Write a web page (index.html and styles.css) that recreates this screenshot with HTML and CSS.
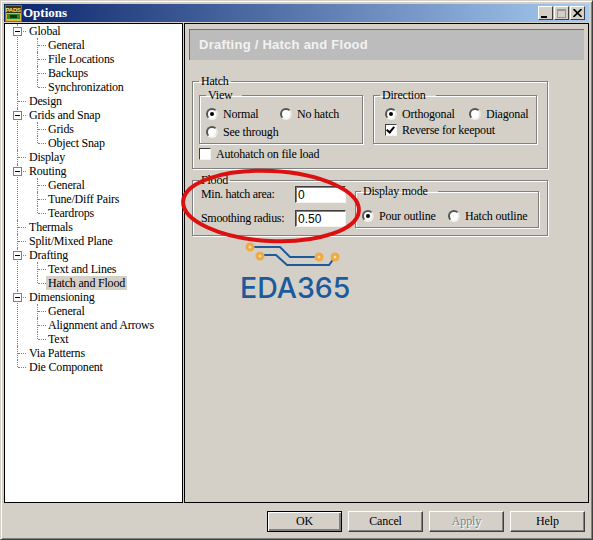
FILE: index.html
```html
<!DOCTYPE html>
<html lang="en">
<head>
    <meta charset="UTF-8">
    <title>Options</title>
    <link rel="stylesheet" href="styles.css">
</head>
<body>
    <div class="window">
        <div class="titlebar">
            <svg class="app-icon" width="17" height="17" viewBox="0 0 17 17">
                <rect width="17" height="17" fill="#8a6a1c"/>
                <rect x="1" y="1" width="15" height="7" fill="#3c3410"/>
                <text x="0.5" y="6.5" font-family="Liberation Sans" font-size="6" font-weight="bold" fill="#f4e08a">PADS</text>
                <rect x="1" y="8" width="15" height="8" fill="#e2b23c"/>
                <rect x="2" y="9" width="13" height="5" fill="#2f8a2f"/>
                <rect x="5" y="10" width="7" height="3" fill="#12380f"/>
            </svg>
            <span class="title-text">Options</span>
            <div class="win-buttons">
                <span class="win-btn"><i class="glyph-min"></i></span>
                <span class="win-btn"><i class="glyph-max"></i></span>
                <span class="win-btn">
                    <svg width="9" height="8" viewBox="0 0 9 8"><path d="M0.5 0 L8.5 8 M8.5 0 L0.5 8" stroke="#000" stroke-width="1.6"/></svg>
                </span>
            </div>
        </div>

        <div class="main">
            <div class="tree-panel">
                <ul class="tree">
                    <li><i class="toggle"></i><span class="label">Global</span>
                        <ul>
                            <li><span class="label">General</span></li>
                            <li><span class="label">File Locations</span></li>
                            <li><span class="label">Backups</span></li>
                            <li><span class="label">Synchronization</span></li>
                        </ul>
                    </li>
                    <li><span class="label">Design</span></li>
                    <li><i class="toggle"></i><span class="label">Grids and Snap</span>
                        <ul>
                            <li><span class="label">Grids</span></li>
                            <li><span class="label">Object Snap</span></li>
                        </ul>
                    </li>
                    <li><span class="label">Display</span></li>
                    <li><i class="toggle"></i><span class="label">Routing</span>
                        <ul>
                            <li><span class="label">General</span></li>
                            <li><span class="label">Tune/Diff Pairs</span></li>
                            <li><span class="label">Teardrops</span></li>
                        </ul>
                    </li>
                    <li><span class="label">Thermals</span></li>
                    <li><span class="label">Split/Mixed Plane</span></li>
                    <li><i class="toggle"></i><span class="label">Drafting</span>
                        <ul>
                            <li><span class="label">Text and Lines</span></li>
                            <li><span class="label selected">Hatch and Flood</span></li>
                        </ul>
                    </li>
                    <li><i class="toggle"></i><span class="label">Dimensioning</span>
                        <ul>
                            <li><span class="label">General</span></li>
                            <li><span class="label">Alignment and Arrows</span></li>
                            <li><span class="label">Text</span></li>
                        </ul>
                    </li>
                    <li><span class="label">Via Patterns</span></li>
                    <li><span class="label">Die Component</span></li>
                </ul>
            </div>

            <div class="content-panel">
                <div class="page-header">Drafting / Hatch and Flood</div>

                <fieldset class="group hatch">
                    <legend>Hatch</legend>
                    <div class="hatch-row">
                        <fieldset class="group view">
                            <legend>View</legend>
                            <div class="opts view-opts">
                                <span class="opt"><i class="radio on"></i>Normal</span>
                                <span class="opt"><i class="radio"></i>No hatch</span>
                                <span class="opt"><i class="radio"></i>See through</span>
                            </div>
                        </fieldset>
                        <fieldset class="group direction">
                            <legend>Direction</legend>
                            <div class="opts direction-opts">
                                <span class="opt"><i class="radio on"></i>Orthogonal</span>
                                <span class="opt"><i class="radio"></i>Diagonal</span>
                                <span class="opt wide"><i class="check on"></i>Reverse for keepout</span>
                            </div>
                        </fieldset>
                    </div>
                    <span class="opt autohatch"><i class="check"></i>Autohatch on file load</span>
                </fieldset>

                <fieldset class="group flood">
                    <legend>Flood</legend>
                    <div class="flood-row">
                        <div class="fields">
                            <label class="field">Min. hatch area:<input type="text" value="0"></label>
                            <label class="field">Smoothing radius:<input type="text" value="0.50"></label>
                        </div>
                        <fieldset class="group display-mode">
                            <legend>Display mode</legend>
                            <div class="opts display-opts">
                                <span class="opt"><i class="radio on"></i>Pour outline</span>
                                <span class="opt"><i class="radio"></i>Hatch outline</span>
                            </div>
                        </fieldset>
                    </div>
                </fieldset>

                <div class="logo">
                    <svg class="logo-mark" width="100" height="28" viewBox="0 0 100 28">
                        <g fill="none" stroke="#1c5a9c" stroke-width="2">
                            <path d="M5 5 H35 L45 15 H74"/>
                            <path d="M15 13 H31 L42 23 H84 L90 15"/>
                        </g>
                        <g fill="#fbdf9f" stroke="#eeaa44" stroke-width="3">
                            <circle cx="5" cy="5" r="3"/>
                            <circle cx="15" cy="14" r="3"/>
                            <circle cx="74" cy="15" r="3"/>
                            <circle cx="90" cy="15" r="3"/>
                        </g>
                    </svg>
                    <div class="logo-text">EDA365</div>
                </div>

                <svg class="highlight" width="190" height="84" viewBox="0 0 190 84">
                    <ellipse cx="95" cy="42" rx="88" ry="35" transform="rotate(3 95 42)" fill="none" stroke="#dc1010" stroke-width="4"/>
                </svg>
            </div>
        </div>

        <div class="footer">
            <button class="btn default" type="button">OK</button>
            <button class="btn" type="button">Cancel</button>
            <button class="btn" type="button" disabled>Apply</button>
            <button class="btn" type="button">Help</button>
        </div>
    </div>
</body>
</html>
```

FILE: styles.css
```css
body {
    margin: 0;
    background-color: #d4d0c8;
    font-family: "Liberation Serif", serif;
    font-size: 12px;
    letter-spacing: -0.2px;
    color: #000;
}

.window {
    box-sizing: border-box;
    width: 593px;
    height: 540px;
    padding: 3px;
    display: flex;
    flex-direction: column;
    border: 1px solid;
    border-color: #d4d0c8 #404040 #404040 #d4d0c8;
    box-shadow: inset 1px 1px 0 #fff, inset -1px -1px 0 #808080;
}

/* Title bar */
.titlebar {
    height: 18px;
    flex: none;
    display: flex;
    align-items: center;
    padding-right: 4px;
    background: linear-gradient(to right, #0a246a, #a6caf0);
}

.app-icon {
    flex: none;
    margin-left: 1px;
}

.title-text {
    margin-left: 1px;
    color: #fff;
    font-size: 13px;
    font-weight: bold;
    letter-spacing: 0;
}

.win-buttons {
    margin-left: auto;
    display: flex;
    gap: 1px;
}

.win-btn {
    box-sizing: border-box;
    width: 15px;
    height: 14px;
    display: flex;
    align-items: center;
    justify-content: center;
    background-color: #d4d0c8;
    border: 1px solid;
    border-color: #fff #404040 #404040 #fff;
}

.glyph-min {
    width: 6px;
    height: 2px;
    margin: 7px 3px 0 0;
    background-color: #000;
}

.glyph-max {
    box-sizing: border-box;
    width: 9px;
    height: 9px;
    border: 1px solid #9a968e;
    border-top-width: 2px;
}

/* Tree and page */
.main {
    height: 480px;
    flex: none;
    margin-top: 1px;
    display: flex;
    gap: 1px;
}

.tree-panel {
    box-sizing: border-box;
    width: 179px;
    background-color: #fff;
    border: 1px solid #000;
}

.tree,
.tree ul {
    list-style-type: none;
    margin: 0;
    padding: 0;
}

.tree {
    padding-left: 12px;
}

.tree ul {
    padding-left: 20px;
}

.tree li {
    position: relative;
}

/* dotted connector */
.tree li::before {
    content: "";
    position: absolute;
    left: 0;
    top: 0;
    height: 100%;
    border-left: 1px dotted #808080;
}

.tree li:last-child::before {
    height: 7px;
}

.label {
    position: relative;
    display: block;
    height: 14px;
    line-height: 14px;
    padding-left: 12px;
    white-space: nowrap;
}

.tree ul .label {
    padding-left: 11px;
}

.label::before {
    content: "";
    position: absolute;
    left: 1px;
    top: 7px;
    width: 8px;
    border-top: 1px dotted #808080;
}

.label.selected {
    background: linear-gradient(#d4d0c8, #d4d0c8) 9px 0 / 81px 14px no-repeat;
}

.toggle {
    position: absolute;
    z-index: 1;
    left: -4px;
    top: 3px;
    box-sizing: border-box;
    width: 9px;
    height: 9px;
    background: linear-gradient(#000, #000) center / 5px 1px no-repeat #fff;
    border: 1px solid #808080;
}

.content-panel {
    position: relative;
    box-sizing: border-box;
    width: 405px;
    padding: 5px 0 0 4px;
    border: 1px solid #000;
}

.page-header {
    box-sizing: border-box;
    width: 395px;
    height: 31px;
    padding-left: 9px;
    background-color: #bcbcbc;
    border-top: 1px solid #6f6f6f;
    border-left: 1px solid #6f6f6f;
    color: #f2f2f2;
    font-family: "Liberation Sans", sans-serif;
    font-size: 13px;
    font-weight: bold;
    letter-spacing: 0.25px;
    line-height: 29px;
}

/* Group boxes */
.group {
    min-width: 0;
    margin: 0;
    padding: 0;
    border: 1px solid #808080;
    box-shadow: 1px 1px 0 #fff, inset 1px 1px 0 #fff;
}

.group legend {
    padding: 0 2px;
    line-height: 14px;
}

.hatch {
    width: 356px;
    box-sizing: border-box;
    margin: 14px 0 0 3px;
    padding: 0 0 7px 6px;
}

.hatch-row {
    display: flex;
    gap: 10px;
}

.view,
.direction {
    box-sizing: border-box;
    width: 164px;
    height: 56px;
    padding-top: 5px;
}

.view {
    padding-left: 6px;
}

.direction {
    padding-left: 11px;
}

.view legend,
.direction legend,
.display-mode legend {
    padding-right: 10px;
}

.direction legend {
    margin-left: -5px;
}

.opts {
    display: grid;
    align-items: center;
}

.view-opts {
    grid-template-columns: 74px auto;
    row-gap: 4px;
}

.direction-opts {
    grid-template-columns: 84px auto;
    row-gap: 2px;
}

.wide {
    grid-column: 1 / 3;
}

.opt {
    display: flex;
    align-items: center;
    gap: 5px;
    height: 14px;
    line-height: 14px;
    white-space: nowrap;
}

.radio {
    position: relative;
    flex: none;
    box-sizing: border-box;
    width: 12px;
    height: 12px;
    background-color: #fff;
    border-radius: 50%;
    border: 2px solid;
    border-color: #555 #e8e6e0 #f4f3ef #555;
}

.radio.on::after {
    content: "";
    position: absolute;
    left: 2px;
    top: 2px;
    width: 4px;
    height: 4px;
    border-radius: 50%;
    background-color: #000;
}

.check {
    position: relative;
    flex: none;
    box-sizing: border-box;
    width: 12px;
    height: 12px;
    background-color: #fff;
    border: 1px solid;
    border-color: #404040 #f4f3ef #f4f3ef #404040;
}

.check.on::after {
    content: "";
    position: absolute;
    left: 2px;
    top: 0;
    width: 3px;
    height: 6px;
    border: solid #000;
    border-width: 0 2px 2px 0;
    transform: rotate(40deg);
}

.autohatch {
    margin: 3px 0 0 0;
}

.flood {
    width: 356px;
    box-sizing: border-box;
    margin: 5px 0 0 3px;
    padding: 0 0 7px 8px;
}

.flood > legend {
    margin-left: -2px;
    line-height: 12px;
}

.flood-row {
    display: flex;
    gap: 8px;
}

.fields {
    display: flex;
    flex-direction: column;
    gap: 7px;
    width: 146px;
}

.field {
    display: flex;
    align-items: center;
    justify-content: space-between;
    height: 17px;
    letter-spacing: -0.3px;
    white-space: nowrap;
}

.field input {
    box-sizing: border-box;
    width: 51px;
    height: 17px;
    margin-right: 1px;
    padding: 0 2px;
    background-color: #fff;
    border: 1px solid;
    border-color: #404040 #f4f3ef #f4f3ef #404040;
    box-shadow: inset 1px 1px 0 #808080;
    outline: none;
    font-family: "Liberation Sans", sans-serif;
    font-size: 12px;
}

.display-mode {
    box-sizing: border-box;
    width: 184px;
    height: 44px;
    margin-top: -2px;
    padding: 11px 0 0 6px;
}

.display-mode legend {
    margin-left: -1px;
}

.display-opts {
    grid-template-columns: 86px auto;
}

/* Logo under the flood box */
.logo {
    margin: 6px 0 0 52px;
}

.logo-mark {
    display: block;
    margin-left: 4px;
}

.logo-text {
    margin: 3px 0 0 -1px;
    color: #1c5a9c;
    font-family: Inter, "Liberation Sans", sans-serif;
    font-size: 28.5px;
    font-weight: 500;
    line-height: 29px;
    letter-spacing: 0;
}

/* Red ring drawn over the screenshot */
.highlight {
    position: absolute;
    left: -9px;
    top: 140px;
    pointer-events: none;
}

/* Bottom buttons */
.footer {
    display: flex;
    gap: 6px;
    justify-content: flex-end;
    margin-top: 8px;
    padding-right: 4px;
}

.btn {
    box-sizing: border-box;
    width: 75px;
    height: 21px;
    padding: 0;
    background-color: #d4d0c8;
    border: 1px solid;
    border-color: #fff #404040 #404040 #fff;
    box-shadow: inset -1px -1px 0 #808080;
    color: #000;
    font-family: "Liberation Serif", serif;
    font-size: 12px;
    letter-spacing: -0.1px;
}

.btn.default {
    outline: 1px solid #000;
    outline-offset: -1px;
    box-shadow: inset 1px 1px 0 #fff, inset -2px -2px 0 #808080;
}

.btn:disabled {
    color: #808080;
    text-shadow: 1px 1px 0 #fff;
}
```
